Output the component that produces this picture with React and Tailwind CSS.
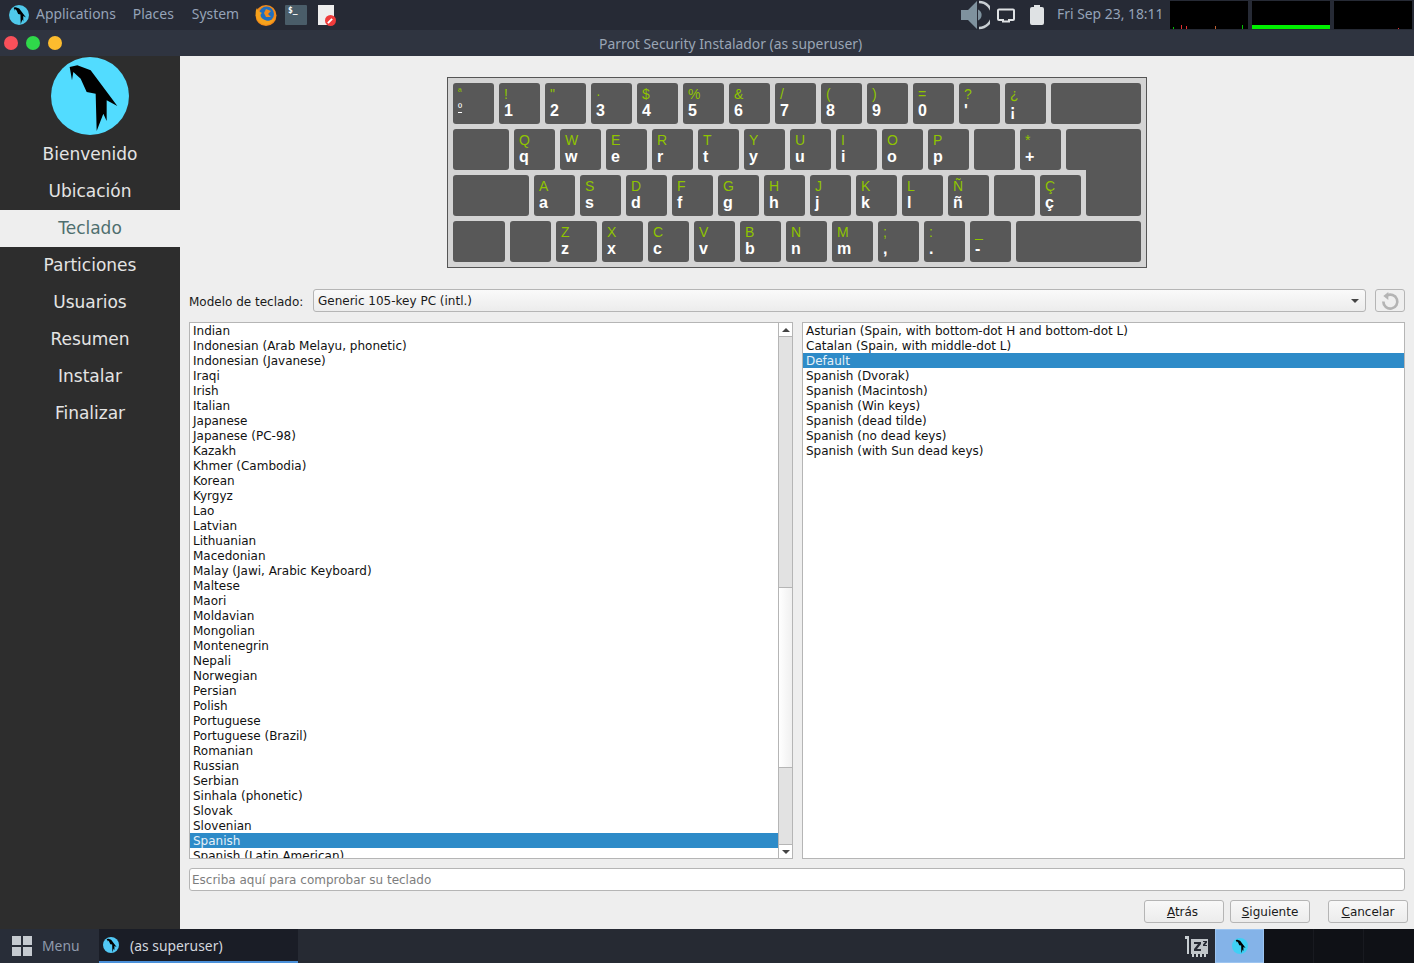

const dv = "font-['DejaVu_Sans',sans-serif]";

const layouts = [
  "Indian","Indonesian (Arab Melayu, phonetic)","Indonesian (Javanese)","Iraqi","Irish","Italian","Japanese","Japanese (PC-98)","Kazakh","Khmer (Cambodia)","Korean","Kyrgyz","Lao","Latvian","Lithuanian","Macedonian","Malay (Jawi, Arabic Keyboard)","Maltese","Maori","Moldavian","Mongolian","Montenegrin","Nepali","Norwegian","Persian","Polish","Portuguese","Portuguese (Brazil)","Romanian","Russian","Serbian","Sinhala (phonetic)","Slovak","Slovenian","Spanish","Spanish (Latin American)"
];
const variants = [
  "Asturian (Spain, with bottom-dot H and bottom-dot L)","Catalan (Spain, with middle-dot L)","Default","Spanish (Dvorak)","Spanish (Macintosh)","Spanish (Win keys)","Spanish (dead tilde)","Spanish (no dead keys)","Spanish (with Sun dead keys)"
];
const steps = ["Bienvenido","Ubicación","Teclado","Particiones","Usuarios","Resumen","Instalar","Finalizar"];

function Parrot({ size, bird = "#000", bg = "#52dcff", className = "" }) {
  return (
    <svg width={size} height={size} viewBox="61 20 234 234" className={className}>
      <circle cx="178" cy="137" r="117" fill={bg} />
      <polygon fill={bird} points="117,50 140,45 180,60 260,167 228,150 228,212 218,190 198,242 195,130 168,125 150,85 128,65 124,90" />
    </svg>
  );
}

function Key({ up, low, w = 41, small }) {
  return (
    <div className="relative h-[41px] shrink-0 rounded-[3px] bg-[#585858] pl-[5px] font-['Liberation_Sans',sans-serif]" style={{ width: w }}>
      {up && <div className={small ? "h-[18px] pt-[3px] text-[10px] leading-[12px] text-[#8fc400]" : "h-[18px] pt-[3px] text-[14px] leading-[17px] text-[#8fc400]"}>{up}</div>}
      {low && <div className={small ? "text-[11px] leading-[12px] text-white underline underline-offset-1" : "text-[16px] font-bold leading-[19px] text-white"}>{low}</div>}
    </div>
  );
}

function Keyboard() {
  const r1 = [['!','1'],['"','2'],['·','3'],['$','4'],['%','5'],['&','6'],['/','7'],['(','8'],[')','9'],['=','0'],['?',"'"],['¿','¡']];
  const r2 = [['Q','q'],['W','w'],['E','e'],['R','r'],['T','t'],['Y','y'],['U','u'],['I','i'],['O','o'],['P','p'],[null,null],['*','+']];
  const r3 = [['A','a'],['S','s'],['D','d'],['F','f'],['G','g'],['H','h'],['J','j'],['K','k'],['L','l'],['Ñ','ñ'],[null,null],['Ç','ç']];
  const r4 = [['Z','z'],['X','x'],['C','c'],['V','v'],['B','b'],['N','n'],['M','m'],[';',','],[':','.'],['_','-']];
  return (
    <div className="flex h-[191px] w-[700px] flex-col gap-[5px] border border-[#555555] bg-[#d4d4d4] pl-[5px] pt-[5px]">
      <div className="flex gap-[5px]">
        <Key up="ª" low="º" small />
        {r1.map((k, i) => <Key key={i} up={k[0]} low={k[1]} />)}
        <Key w={90} />
      </div>
      <div className="flex gap-[5px]">
        <Key w={56} />
        {r2.map((k, i) => <Key key={i} up={k[0]} low={k[1]} />)}
        <div className="h-[41px] w-[75px] rounded-[3px] rounded-br-none bg-[#585858]" />
      </div>
      <div className="flex items-start gap-[5px]">
        <Key w={76} />
        {r3.map((k, i) => <Key key={i} up={k[0]} low={k[1]} />)}
        <div className="-mt-[5px] h-[46px] w-[55px] rounded-b-[3px] bg-[#585858]" />
      </div>
      <div className="flex gap-[5px]">
        <Key w={52} />
        <Key />
        {r4.map((k, i) => <Key key={i} up={k[0]} low={k[1]} />)}
        <Key w={125} />
      </div>
    </div>
  );
}

function Row({ text, selected }) {
  return (
    <div className={"h-[15px] whitespace-nowrap pl-[3px] text-[12px] leading-[17px] " + (selected ? "bg-[#2e8bc8] text-[#e6f0f7]" : "text-[#111111]")}>
      {text}
    </div>
  );
}

function Btn({ first, rest, className = "" }) {
  return (
    <button className={"h-[23px] w-[80px] rounded-[3px] border border-[#b5b5b5] bg-gradient-to-b from-[#f8f8f8] to-[#ececec] text-[12px] leading-[20px] text-[#1a1a1a] " + className}>
      <span className="underline">{first}</span>{rest}
    </button>
  );
}

function Firefox() {
  return (
    <svg width="23" height="21" viewBox="0 0 23 21">
      <circle cx="12" cy="10.5" r="10.5" fill="#f28a1a" />
      <circle cx="12.5" cy="9" r="7.5" fill="#1f6fc0" />
      <path d="M2 5 C1 9 2 16 8 19 C14 21 19 18 21 13 C18 16 13 17 9 14 C6 12 6 9 8 8 C6 7 4 6 3 3 Z" fill="#f6a21c" />
      <path d="M12 4 L17 6 L14 9 L17 12 L12 12 L10 8 Z" fill="#f28a1a" />
    </svg>
  );
}

function App() {
  return (
    <div className={"flex h-[963px] w-[1414px] flex-col overflow-hidden bg-[#eeeeee] " + dv}>
      {/* top panel */}
      <div className="flex h-[30px] shrink-0 items-center bg-[#262a35] font-['Noto_Sans',sans-serif] text-[13.9px] text-[#95a3b8]">
        <Parrot size={20} bg="#4fc8ea" className="ml-[9px]" />
        <span className="mb-[1px] ml-[7px]">Applications</span>
        <span className="mb-[1px] ml-[17px]">Places</span>
        <span className="mb-[1px] ml-[18px]">System</span>
        <div className="ml-[15px]"><Firefox /></div>
        <div className="ml-[8px] h-[20px] w-[22px] rounded-[1px] bg-[#4a5d69] pl-[3px] font-['DejaVu_Sans_Mono',monospace] text-[8px] font-bold leading-[12px] text-white">$_</div>
        <div className="relative ml-[11px] h-[20px] w-[16px] bg-[#eeeeee]">
          <div className="absolute -bottom-[1px] -right-[2px] flex h-[11px] w-[11px] items-center justify-center rounded-full bg-[#ef3b3b]">
            <div className="h-[2px] w-[6px] -rotate-45 bg-white" />
          </div>
        </div>
        <div className="ml-auto flex items-center">
          <svg width="30" height="30" viewBox="0 0 30 30">
            <polygon points="1,10 8,10 17,1 17,29 8,20 1,20" fill="#7f929e" />
            <path d="M18 9.5 A6 6 0 0 1 18 20.5 Z" fill="#7f929e" />
            <path d="M19 2 A13 13 0 0 1 19 28" fill="none" stroke="#c8ced2" strokeWidth="2.5" />
          </svg>
          <svg width="18" height="15" viewBox="0 0 18 15" className="ml-[7px]">
            <path d="M2 1.5 H16 A1 1 0 0 1 17 2.5 V11 A1 1 0 0 1 16 12 H12 V13.5 H6 V12 H2 A1 1 0 0 1 1 11 V2.5 A1 1 0 0 1 2 1.5 Z" fill="none" stroke="#dfe2e4" strokeWidth="2" />
          </svg>
          <svg width="14" height="20" viewBox="0 0 14 20" className="ml-[15px]">
            <path d="M4 0 H10 V2 H12 A2 2 0 0 1 14 4 V18 A2 2 0 0 1 12 20 H2 A2 2 0 0 1 0 18 V4 A2 2 0 0 1 2 2 H4 Z" fill="#dfe2e4" />
          </svg>
          <span className="mb-[1px] ml-[13px] w-[113px] whitespace-nowrap">Fri Sep 23, 18:11</span>
          <div className="flex h-[28px] items-end gap-[4px] pr-[2px]">
            <div className="relative h-[28px] w-[78px] bg-black">
              <div className="absolute bottom-0 left-[3px] h-[2px] w-[1px] bg-[#00c000]" />
              <div className="absolute bottom-0 left-[11px] h-[4px] w-[1px] bg-[#e03030]" />
              <div className="absolute bottom-0 left-[16px] h-[3px] w-[1px] bg-[#e03030]" />
              <div className="absolute bottom-0 left-[45px] h-[3px] w-[1px] bg-[#c06030]" />
              <div className="absolute bottom-0 left-[72px] h-[4px] w-[1px] bg-[#00c000]" />
            </div>
            <div className="flex h-[28px] w-[78px] flex-col justify-end bg-black">
              <div className="h-[4px] bg-[#00f000]" />
            </div>
            <div className="relative h-[28px] w-[78px] bg-black">
              <div className="absolute bottom-0 left-[64px] h-[1px] w-[1px] bg-[#e03030]" />
            </div>
          </div>
        </div>
      </div>

      {/* title bar */}
      <div className="relative flex h-[26px] shrink-0 items-center bg-[#2f3440] pl-[4px] font-['Noto_Sans',sans-serif] text-[13.9px] text-[#9aa5b5]">
        <div className="flex gap-[8px]">
          <div className="h-[14px] w-[14px] rounded-full bg-[#f9505a]" />
          <div className="h-[14px] w-[14px] rounded-full bg-[#2fd84a]" />
          <div className="h-[14px] w-[14px] rounded-full bg-[#fdbc2e]" />
        </div>
        <span className="absolute left-[599px] top-[4px] whitespace-nowrap">Parrot Security Instalador (as superuser)</span>
      </div>

      {/* main */}
      <div className="flex min-h-0 flex-1">
        <div className="flex w-[180px] shrink-0 flex-col bg-[#2d2d2d] text-[17px]">
          <div className="flex h-[80px] shrink-0 justify-center pt-[1px]">
            <Parrot size={78} />
          </div>
          {steps.map((s, i) => (
            <div key={s} className={"flex h-[37px] shrink-0 items-center justify-center " + (i === 2 ? "bg-[#eeeeee] text-[#4f6f6f]" : "text-[#e4e4e4]")}>
              {s}
            </div>
          ))}
        </div>

        <div className="flex min-w-0 flex-1 flex-col">
          <div className="flex pl-[267px] pt-[21px]">
            <Keyboard />
          </div>

          <div className="mt-[21px] flex h-[23px] items-center pl-[9px] pr-[9px] text-[12px] text-[#1a1a1a]">
            <span className="w-[124px] whitespace-nowrap pt-[2px]">Modelo de teclado:</span>
            <div className="flex h-[23px] w-[1053px] items-center justify-between rounded-[3px] border border-[#b5b5b5] bg-gradient-to-b from-[#fafafa] to-[#ececec] pl-[4px] pr-[6px]">
              <span>Generic 105-key PC (intl.)</span>
              <div className="h-0 w-0 border-x-[4px] border-t-[4px] border-x-transparent border-t-[#444444]" />
            </div>
            <div className="ml-[9px] flex h-[23px] w-[30px] items-center justify-center rounded-[3px] border border-[#b5b5b5] bg-[#efefef]">
              <svg width="20" height="20" viewBox="0 0 18 18" fill="none" stroke="#b4b4b4" strokeWidth="2.4">
                <path d="M6 4.2 A6.3 6.3 0 1 1 3 9.5" />
                <polygon points="7.5,1 7.5,8 3,4.5" fill="#b4b4b4" stroke="none" />
              </svg>
            </div>
          </div>

          <div className="mt-[10px] flex h-[537px] gap-[9px] pl-[9px] pr-[9px]">
            <div className="flex h-full w-[604px] border border-[#b5b5b5] bg-white">
              <div className="min-w-0 flex-1 overflow-hidden">
                {layouts.map((l) => <Row key={l} text={l} selected={l === "Spanish"} />)}
              </div>
              <div className="flex w-[14px] shrink-0 flex-col border-l border-[#b5b5b5] bg-[#e2e2e2]">
                <div className="flex h-[14px] items-center justify-center border-b border-[#b5b5b5] bg-white">
                  <div className="h-0 w-0 border-x-[4px] border-b-[4px] border-x-transparent border-b-[#444444]" />
                </div>
                <div className="h-[250px]" />
                <div className="h-[181px] border-y border-[#b5b5b5] bg-gradient-to-r from-[#ffffff] to-[#f0f0f0]" />
                <div className="flex-1" />
                <div className="flex h-[14px] items-center justify-center border-t border-[#b5b5b5] bg-white">
                  <div className="h-0 w-0 border-x-[4px] border-t-[4px] border-x-transparent border-t-[#444444]" />
                </div>
              </div>
            </div>
            <div className="h-full w-[603px] border border-[#b5b5b5] bg-white">
              {variants.map((l) => <Row key={l} text={l} selected={l === "Default"} />)}
            </div>
          </div>

          <div className="ml-[9px] mt-[9px] flex h-[23px] w-[1216px] items-center rounded-[3px] border border-[#b5b5b5] bg-white pl-[2px] pt-[1px] text-[12px] text-[#7d7d7d]">
            Escriba aquí para comprobar su teclado
          </div>

          <div className="mt-[9px] flex pr-[6px]">
            <div className="ml-auto flex gap-[6px]">
              <Btn first="A" rest="trás" className="pr-[3px]" />
              <Btn first="S" rest="iguiente" />
              <Btn first="C" rest="ancelar" className="ml-[12px]" />
            </div>
          </div>
        </div>
      </div>

      {/* bottom panel */}
      <div className="flex h-[34px] shrink-0 items-stretch bg-[#262a33] font-['Noto_Sans',sans-serif] text-[13.9px]">
        <div className="flex w-[99px] shrink-0 items-center bg-[#282d38] pl-[12px] text-[#8f9aab]">
          <div className="grid h-[20px] w-[20px] grid-cols-2 gap-[2px]">
            <div className="bg-[#c5cad0]" /><div className="bg-[#c5cad0]" /><div className="bg-[#c5cad0]" /><div className="bg-[#c5cad0]" />
          </div>
          <span className="ml-[10px]">Menu</span>
        </div>
        <div className="flex w-[199px] shrink-0 items-center border-b-2 border-[#4a90d9] bg-[#1a1d26] pl-[4px] text-[#d3d7de]">
          <Parrot size={16} bg="#52c8f5" />
          <span className="ml-[11px] mt-[2px]">(as superuser)</span>
        </div>
        <div className="ml-auto flex items-center">
          <svg width="24" height="22" viewBox="0 0 24 22" className="mr-[7px]" fill="#c8ced2">
            <path d="M1 1 H5 V19 H3 V4 H1 Z" />
            <path d="M7 4 H24 V19 H7 Z" opacity="0.95" />
            <path d="M10 7 H17 V9 L13 14 H17 V16 H10 V14 L14 9 H10 Z" fill="#262a33" />
            <path d="M19 6 H23 V7.5 L21 10 H23 V11 H19 V9.5 L21 7 H19 Z" fill="#262a33" />
            <path d="M8 19 H10 V22 H8 Z M12 19 H14 V22 H12 Z M16 19 H18 V22 H16 Z M20 19 H22 V22 H20 Z" />
          </svg>
          <div className="flex h-[34px] w-[49px] items-center justify-center border border-[#9cc4f0] bg-[#84b3e8]">
            <Parrot size={16} bg="#3fd0f5" />
          </div>
          <div className="flex h-[34px] w-[150px] bg-[#0f1116]">
            <div className="w-[50px] border-r border-[#181a20]" />
            <div className="w-[50px] border-r border-[#181a20]" />
          </div>
        </div>
      </div>
    </div>
  );
}

export default App;
